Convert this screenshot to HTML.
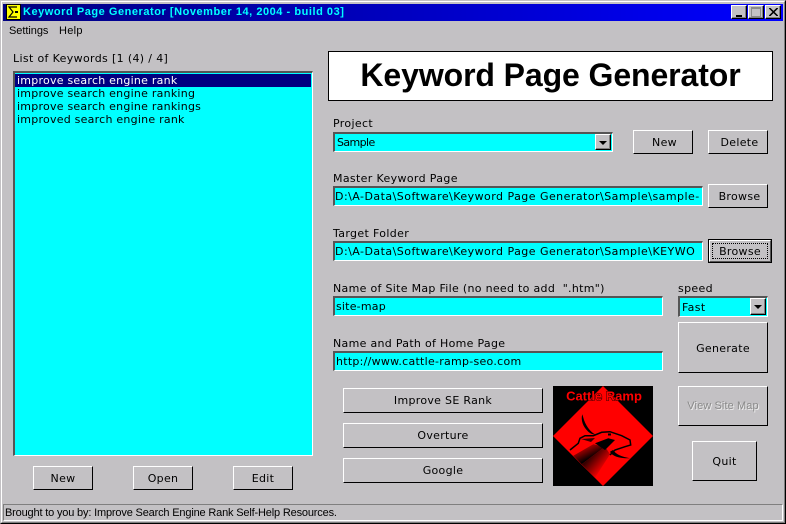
<!DOCTYPE html>
<html><head><meta charset="utf-8"><style>
html,body{margin:0;padding:0}
#w{position:relative;width:786px;height:524px;overflow:hidden;background:#c3c1c4;font:11px "DejaVu Sans",sans-serif;color:#000}
#w div{position:absolute;box-sizing:border-box;white-space:nowrap}
.l{height:14px;line-height:14px;letter-spacing:.35px}
.b{background:#c3c1c4;border:1px solid;border-color:#fff #000 #000 #fff;text-align:center;letter-spacing:.3px}
.i{background:#0ff;border-style:solid;border-width:2px 1px 1px 2px;border-color:#555 #fff #fff #555;padding-left:0;overflow:hidden;letter-spacing:.35px}
.a{background:#c3c1c4;border:1px solid;border-color:#fff #000 #000 #fff;box-shadow:inset -1px -1px 0 #7f7f7f}
.a:after{content:"";position:absolute;left:3px;top:6px;border:4px solid transparent;border-top:4px solid #000;border-bottom:0}
.t{border:1px solid;border-color:#fff #000 #000 #fff;background:#c3c1c4;box-shadow:inset -1px -1px 0 #7f7f7f;width:16px;height:14px;top:5px}
.r{height:13px;line-height:13px;padding-left:2px;letter-spacing:.24px}
</style></head><body><div id="w">
<div style="left:0;top:0;width:786px;height:524px;border:1px solid;border-color:#c3c1c4 #000 #000 #c3c1c4"></div>
<div style="left:1px;top:1px;width:784px;height:522px;border:1px solid;border-color:#fff #7f7f7f #7f7f7f #fff"></div>

<div style="left:3px;top:4px;width:780px;height:17px;background:linear-gradient(90deg,#000080,#0000ff)"></div>
<svg style="position:absolute;left:6px;top:4px" width="15" height="16" viewBox="0 0 15 16"><rect x=".5" y=".5" width="14" height="15" fill="#ff0" stroke="#000"/><path d="M11 3H3L7 8L3 13H11" fill="none" stroke="#000" stroke-width="1.2"/><rect x="9" y="7" width="3" height="2" fill="#000"/></svg>
<div style="left:23px;top:4px;color:#0ff;font:bold 11px/16px 'Liberation Sans',sans-serif;letter-spacing:.54px">Keyword Page Generator [November 14, 2004 - build 03]</div>
<div class="t" style="left:731px"><div style="left:4px;top:9px;width:6px;height:2px;background:#000"></div></div>
<div class="t" style="left:748px"><div style="left:2px;top:1px;width:10px;height:10px;border:1px solid #8a8a8a;border-top-width:2px"></div></div>
<div class="t" style="left:765px"><svg style="position:absolute;left:3px;top:2px" width="9" height="8" viewBox="0 0 9 8"><path d="M0 0L8 8M1 0L9 8M8 0L0 8M9 0L1 8" stroke="#000" stroke-width=".8"/></svg></div>

<div style="left:9px;top:24px;font:11px/14px 'Liberation Sans',sans-serif;letter-spacing:-.05px">Settings</div>
<div style="left:59px;top:24px;font:11px/14px 'Liberation Sans',sans-serif;letter-spacing:.3px">Help</div>

<div class="l" style="left:13px;top:52px">List of Keywords [1 (4) / 4]</div>
<div style="left:13px;top:71px;width:300px;height:385px;background:#0ff;border-style:solid;border-width:2px 1px 1px 2px;border-color:#555 #fff #fff #555"></div>
<div class="r" style="left:15px;top:74px;width:296px;background:#000080;color:#fff">improve search engine rank</div>
<div class="r" style="left:15px;top:87px;width:296px">improve search engine ranking</div>
<div class="r" style="left:15px;top:100px;width:296px">improve search engine rankings</div>
<div class="r" style="left:15px;top:113px;width:296px">improved search engine rank</div>

<div class="b" style="left:33px;top:466px;width:60px;height:24px;line-height:23px">New</div>
<div class="b" style="left:133px;top:466px;width:60px;height:24px;line-height:23px">Open</div>
<div class="b" style="left:233px;top:466px;width:60px;height:24px;line-height:23px">Edit</div>

<div style="left:328px;top:51px;width:445px;height:50px;background:#fff;border:1px solid #000;text-align:center;font:bold 32px/47px 'Liberation Sans',sans-serif;letter-spacing:-.1px">Keyword Page Generator</div>

<div class="l" style="left:333px;top:117px">Project</div>
<div class="i" style="left:333px;top:132px;width:280px;height:20px;line-height:18px;padding-left:2px;letter-spacing:-.6px">Sample</div>
<div class="a" style="left:595px;top:134px;width:16px;height:16px"></div>
<div class="b" style="left:633px;top:130px;width:60px;height:24px;line-height:23px;padding-left:3px">New</div>
<div class="b" style="left:708px;top:130px;width:60px;height:24px;line-height:23px;padding-left:3px">Delete</div>

<div class="l" style="left:333px;top:172px">Master Keyword Page</div>
<div class="i" style="left:333px;top:186px;width:370px;height:20px;line-height:18px;letter-spacing:.47px">D:\A-Data\Software\Keyword Page Generator\Sample\sample-</div>
<div class="b" style="left:708px;top:184px;width:60px;height:24px;line-height:23px;padding-left:3px">Browse</div>

<div class="l" style="left:333px;top:227px">Target Folder</div>
<div class="i" style="left:333px;top:241px;width:370px;height:20px;line-height:18px;letter-spacing:.47px">D:\A-Data\Software\Keyword Page Generator\Sample\KEYWO</div>
<div style="left:708px;top:239px;width:64px;height:24px;background:#000"></div>
<div class="b" style="left:709px;top:240px;width:62px;height:22px;line-height:21px;border-right-color:#555;border-bottom-color:#555">Browse</div>
<div style="left:712px;top:243px;width:56px;height:16px;border:1px dotted #000"></div>

<div class="l" style="left:333px;top:282px;letter-spacing:.3px">Name of Site Map File (no need to add&nbsp; ".htm")</div>
<div class="i" style="left:333px;top:296px;width:330px;height:20px;line-height:18px;padding-left:1px;letter-spacing:.2px">site-map</div>
<div class="l" style="left:678px;top:282px">speed</div>
<div class="i" style="left:678px;top:296px;width:90px;height:21px;line-height:19px;padding-left:2px">Fast</div>
<div class="a" style="left:750px;top:298px;width:16px;height:17px"></div>
<div class="b" style="left:678px;top:322px;width:90px;height:51px;line-height:51px">Generate</div>

<div class="l" style="left:333px;top:337px;letter-spacing:.3px">Name and Path of Home Page</div>
<div class="i" style="left:333px;top:351px;width:330px;height:20px;line-height:18px;padding-left:1px;letter-spacing:.27px">http://www.cattle-ramp-seo.com</div>

<div class="b" style="left:343px;top:388px;width:200px;height:25px;line-height:23px">Improve SE Rank</div>
<div class="b" style="left:343px;top:423px;width:200px;height:25px;line-height:23px">Overture</div>
<div class="b" style="left:343px;top:458px;width:200px;height:25px;line-height:23px">Google</div>

<svg style="position:absolute;left:553px;top:386px" width="100" height="100" viewBox="0 0 100 100">
<defs>
<linearGradient id="g1" gradientUnits="userSpaceOnUse" x1="30" y1="56" x2="38" y2="72"><stop offset="0" stop-color="#f00"/><stop offset="1" stop-color="#000"/></linearGradient>
<linearGradient id="g2" gradientUnits="userSpaceOnUse" x1="38" y1="70" x2="52" y2="82"><stop offset="0" stop-color="#300"/><stop offset="1" stop-color="#f00"/></linearGradient>
</defs>
<rect width="100" height="100" fill="#000"/>
<path d="M50 0L100 50L50 100L0 50Z" fill="#f00"/>
<path d="M20.3 69.7L40.3 58.3L52 60.7L28.7 78.3Z" fill="url(#g1)"/>
<path d="M28.7 78.3L52 60.7L57 68.3L42 91.7Z" fill="url(#g2)"/>
<path d="M29.3 28.3C27.5 34 30 41 35.3 45.7C37.5 47.7 40 48.5 42 48.3C38 46 34 42 31 34Z" fill="#000"/>
<path d="M17 64L25.3 57.3L27 52.3L32 49.7H40.3L48.7 46.3L57 45.7L68.7 49.7L77 54L77.7 59L72 60.7L62 64L57 69" fill="none" stroke="#000" stroke-width="1.5"/>
<path d="M42 57.3L55.3 52.3L62 54L52 64Z" fill="#000"/>
<path d="M57 65.7C59 70 66 72.5 77 72.3C69 70.5 63.5 69 60 64Z" fill="#000"/>
<path d="M28 53L42 52L38 56Z" fill="#000" opacity=".8"/>
<rect x="55" y="47.5" width="3" height="2" fill="#000"/>
<text x="51" y="14.5" text-anchor="middle" font-family="Liberation Sans" font-weight="bold" font-size="13" fill="#f00" stroke="#000" stroke-width=".8" paint-order="stroke">Cattle Ramp</text>
</svg>

<div class="b" style="left:678px;top:386px;width:90px;height:40px;color:#8a8a8a;text-shadow:1px 1px 0 #eee;font:11px/38px 'Liberation Sans',sans-serif;letter-spacing:.1px">View Site Map</div>
<div class="b" style="left:692px;top:441px;width:65px;height:40px;line-height:40px">Quit</div>

<div style="left:3px;top:504px;width:780px;height:17px;border:1px solid;border-color:#7f7f7f #fff #fff #7f7f7f;padding-left:1px;font:11px/17px 'Liberation Sans',sans-serif;letter-spacing:-.17px">Brought to you by: Improve Search Engine Rank Self-Help Resources.</div>
</div></body></html>
